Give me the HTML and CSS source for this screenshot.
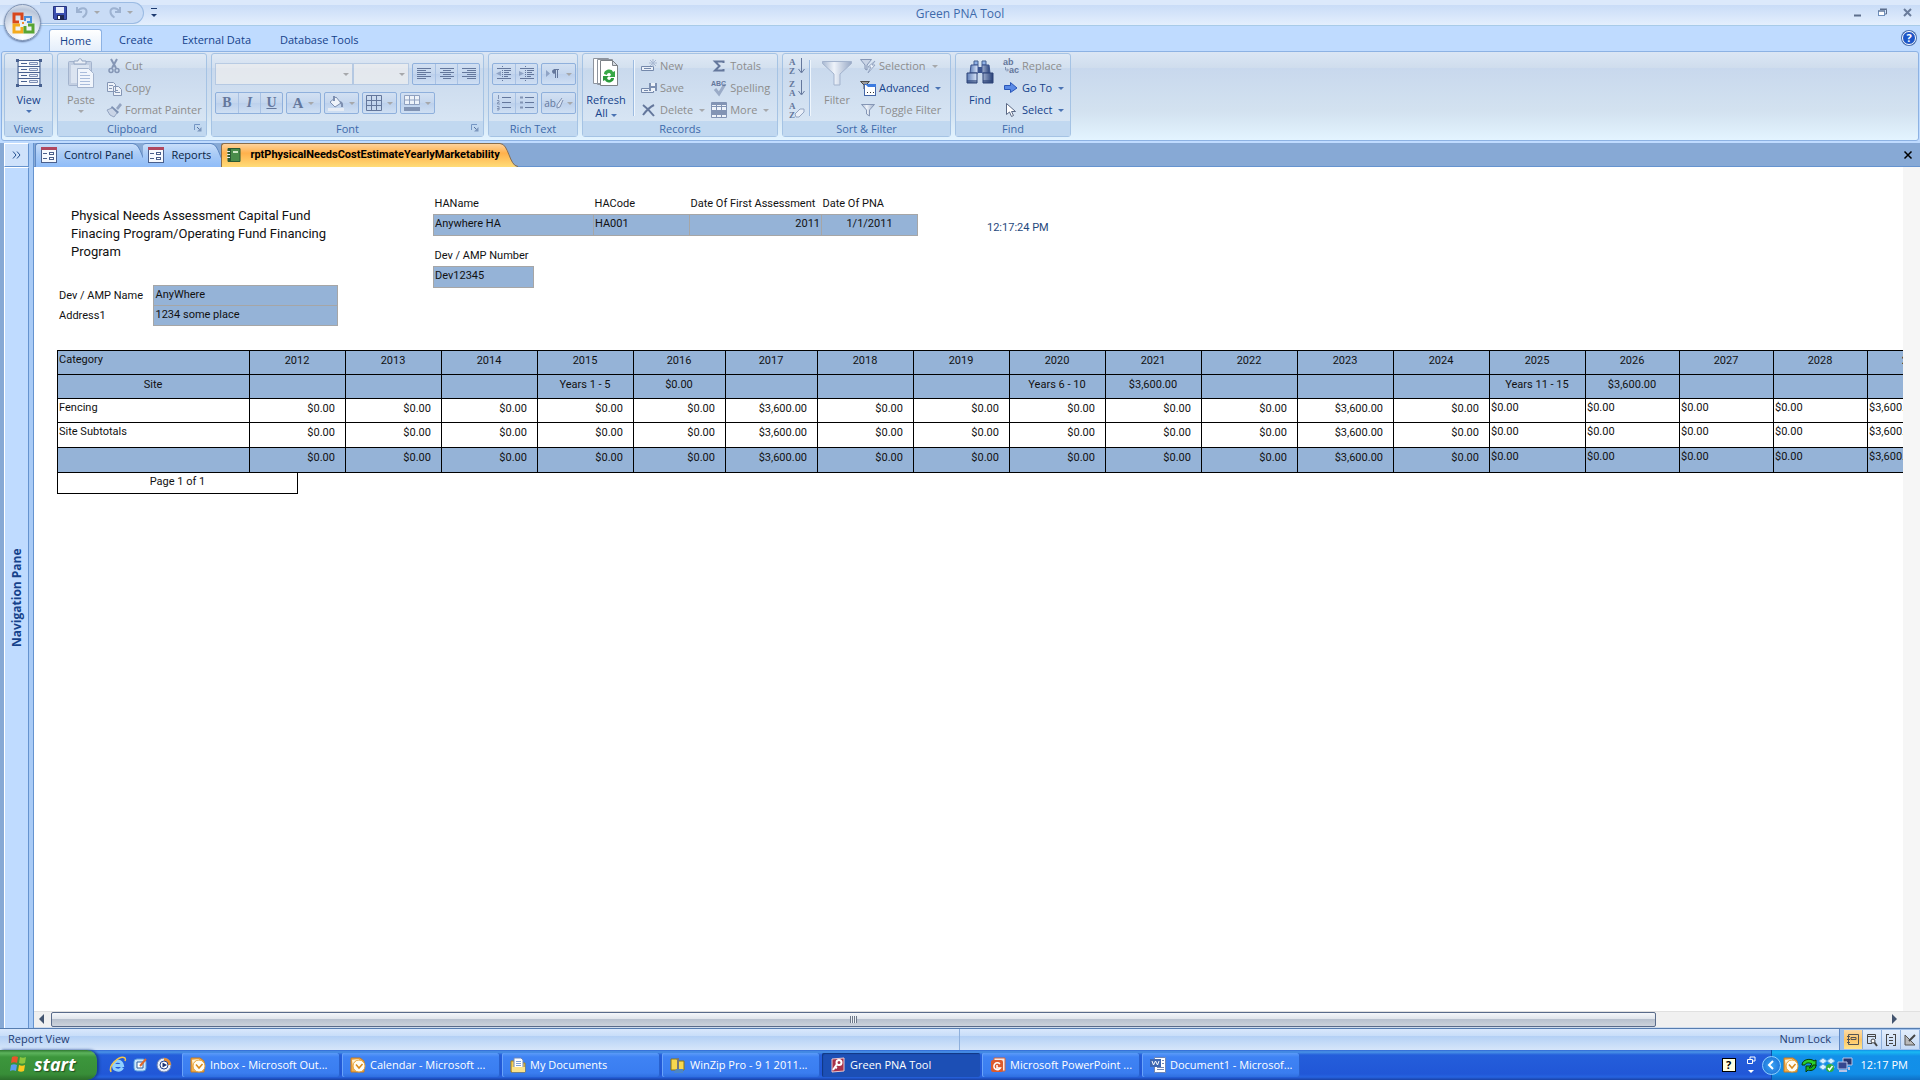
FILE: index.html
```html
<!DOCTYPE html>
<html lang="en">
  <head>
    <meta charset="UTF-8" />
    <meta name="viewport" content="width=device-width, initial-scale=1.0" />
    <title>Green PNA Tool</title>
    <link rel="stylesheet" href="styles.css">
  </head>
  <body>
    <svg class="defs" aria-hidden="true">
      <defs>
        <linearGradient id="g-blue" x1="0" y1="0" x2="0" y2="1">
          <stop offset="0" stop-color="#c8defa" />
          <stop offset="0.45" stop-color="#a9cbf6" />
          <stop offset="1" stop-color="#8fbcf8" />
        </linearGradient>
        <linearGradient id="g-orange" x1="0" y1="0" x2="0" y2="1">
          <stop offset="0" stop-color="#ffd29b" />
          <stop offset="0.4" stop-color="#ffb14c" />
          <stop offset="1" stop-color="#ffdc78" />
        </linearGradient>
        <linearGradient id="g-steel" x1="0" y1="0" x2="1" y2="0">
          <stop offset="0" stop-color="#5f7fb8" />
          <stop offset="0.4" stop-color="#dfeafc" />
          <stop offset="1" stop-color="#263f78" />
        </linearGradient>
        <linearGradient id="g-funnel" x1="0" y1="0" x2="1" y2="0">
          <stop offset="0" stop-color="#a9b9d2" />
          <stop offset="0.4" stop-color="#eef3fa" />
          <stop offset="1" stop-color="#98a9c6" />
        </linearGradient>
        <symbol id="i-form" viewBox="0 0 16 16">
          <rect x=".5" y=".5" width="15" height="15" fill="#f6f9fe" stroke="#4a5f8c" />
          <rect width="16" height="3" fill="#b0475f" />
          <path d="M2 6.500h4M2 11.500h4" stroke="#4a5f8c" />
          <rect x="8.500" y="5.500" width="4" height="2" fill="#fff" stroke="#4a5f8c" />
          <rect x="8.500" y="10.500" width="4" height="2" fill="#fff" stroke="#4a5f8c" />
        </symbol>
        <symbol id="i-outlook" viewBox="0 0 16 16">
          <path d="M1 1h9l4 3v11H1z" fill="#f6b04c" stroke="#c87a1d" />
          <path d="M2 3l7-1v3L3 9z" fill="#fff1cf" />
          <circle cx="9" cy="9" r="6" fill="#fffdf2" stroke="#e7a338" />
          <path d="M6 7.500L9 11l3.500-4" fill="none" stroke="#d98a1d" stroke-width="1.500" />
        </symbol>
        <symbol id="i-launch" viewBox="0 0 8 8">
          <path d="M.5 6V.5H6" fill="none" stroke="#7596c4" />
          <path d="M3 3l3 3" stroke="#54719f" />
          <path d="M7.500 3v4.500H3z" fill="#7d97bd" />
        </symbol>
      </defs>
    </svg>

    <header class="titlebar">
      <div class="title-left">
        <div class="quick-access">
          <button class="qa-btn" aria-label="Save">
            <svg width="14" height="14" viewBox="0 0 14 14"><path d="M.5.5h13v13h-12l-1-1z" fill="#3b4fb0" stroke="#26337c" /><path d="M3 1h8v6H3z" fill="#e8eefb" /><path d="M4 9h7v5H4z" fill="#1f2750" /><path d="M5 10h2v3H5z" fill="#fff" /></svg>
          </button>
          <button class="qa-btn" aria-label="Undo" disabled>
            <svg width="14" height="13" viewBox="0 0 14 13"><path d="M2 1v5h5M2.500 5.500C5 1 12 1 11.500 6c0 3-2 4-4 5.500" fill="none" stroke="#9db2d1" stroke-width="2" /></svg>
            <span class="caret"></span>
          </button>
          <button class="qa-btn" aria-label="Redo" disabled>
            <svg width="14" height="13" viewBox="0 0 14 13"><path d="M12 1v5H7M11.500 5.500C9 1 2 1 2.500 6c0 3 2 4 4 5.500" fill="none" stroke="#9db2d1" stroke-width="2" /></svg>
            <span class="caret"></span>
          </button>
        </div>
        <button class="qa-more" aria-label="Customize Quick Access Toolbar"><span class="caret"></span></button>
      </div>
      <h1 class="app-title">Green PNA Tool</h1>
      <div class="window-buttons">
        <button aria-label="Minimize"><svg width="9" height="9" viewBox="0 0 9 9"><path d="M1 7.500h7" stroke="#5d6f8d" stroke-width="2" /></svg></button>
        <button aria-label="Restore"><svg width="9" height="9" viewBox="0 0 9 9"><path d="M2 1.500h6.500V6H7" fill="none" stroke="#5d6f8d" /><rect x=".5" y="3" width="6" height="4.500" fill="#fff" stroke="#6f8fbb" /><path d="M0 3h7M2 1h7" stroke="#5d6f8d" /></svg></button>
        <button aria-label="Close"><svg width="9" height="9" viewBox="0 0 9 9"><path d="M1 1l7 7M8 1L1 8" stroke="#6a7c9b" stroke-width="2" /></svg></button>
      </div>
    </header>
    <button class="orb" aria-label="Office Button">
      <svg width="24" height="24" viewBox="0 0 24 24" fill="none">
        <path d="M11 9V3H3v8h5" stroke="#d8471c" stroke-width="3" />
        <path d="M14 10V6h6v5h-4" stroke="#4a90dc" stroke-width="2" />
        <path d="M9 14H3v7h8v-5" stroke="#f4ab1e" stroke-width="3" />
        <path d="M14 15v6h8v-7h-5" stroke="#58a532" stroke-width="3" />
        <path d="M11 11h2v2h-2z" fill="#f28a2e" />
      </svg>
    </button>

    <nav class="ribbon-tabs">
      <button class="ribbon-tab active">Home</button>
      <button class="ribbon-tab">Create</button>
      <button class="ribbon-tab">External Data</button>
      <button class="ribbon-tab">Database Tools</button>
      <button class="help" aria-label="Help">?</button>
    </nav>

    <section class="ribbon">
      <div class="group views">
        <div class="group-body">
          <button class="big">
            <svg width="26" height="28" viewBox="0 0 26 28"><path d="M3 2h20v24H3z" fill="#fff" opacity=".8" /><path d="M2 1.500h22v25H2zM2 7.500h22M2 13.500h22M2 19.500h22" stroke="#47608f" fill="none" /><path d="M5 4.500h6M5 10.500h6M5 16.500h6M5 22.500h6" stroke="#47608f" /><path d="M13.500 3.500h8v2h-8zM13.500 9.500h8v2h-8zM13.500 15.500h8v2h-8zM13.500 21.500h8v2h-8z" fill="#e8eefb" stroke="#7d8fb3" /><path d="M0 0h3v3H0zM23 0h3v3h-3zM0 25h3v3H0zM23 25h3v3h-3z" fill="#47608f" /></svg>
            <span>View</span><span class="caret"></span>
          </button>
        </div>
        <div class="group-label">Views</div>
      </div>

      <div class="group clipboard">
        <div class="group-body">
          <button class="big" disabled>
            <svg width="28" height="30" viewBox="0 0 28 30"><rect x="1.500" y="3.500" width="23" height="24" rx="1" fill="#c3cfe2" stroke="#a3b3cd" /><rect x="4" y="7" width="18" height="18" fill="#dbe4f1" /><path d="M7 6V3h4c0-3 4-3 4 0h4v3z" fill="#e9eef6" stroke="#93a5c2" /><path d="M10.500 10.500h11l5 5v14h-16z" fill="#f0f5fc" stroke="#a3b3cd" /><path d="M13 14.500h7M13 17.500h10M13 20.500h10M13 23.500h10M13 26.500h10" stroke="#a9bcdb" /></svg>
            <span>Paste</span><span class="caret"></span>
          </button>
          <div class="stack">
            <button class="small" disabled><svg width="16" height="16" viewBox="0 0 16 16" fill="none"><path d="M5 1l5 9M11 1L6 10" stroke="#8596b5" stroke-width="2" /><circle cx="5" cy="12.500" r="2" stroke="#8596b5" stroke-width="1.500" /><circle cx="11" cy="12.500" r="2" stroke="#8596b5" stroke-width="1.500" /></svg>Cut</button>
            <button class="small" disabled><svg width="16" height="16" viewBox="0 0 16 16"><path d="M1.500 2.500h6l2 2v7h-8zM7.500 6.500h5l3 3v6h-8z" fill="#edf2f9" stroke="#8596b5" /><path d="M3 5.500h4M3 8.500h3M9 10.500h3M9 12.500h5" stroke="#8596b5" /></svg>Copy</button>
            <button class="small" disabled><svg width="16" height="16" viewBox="0 0 16 16"><path d="M10 6l4-5 2 2-4 5z" fill="#93a4c1" /><path d="M6 4l7 6-2 2-7-5z" fill="#7b8fb1" /><path d="M1 8l5-2 5 5-3 4-4-2z" fill="#c9d4e6" stroke="#93a4c1" /></svg>Format Painter</button>
          </div>
        </div>
        <div class="group-label">Clipboard<button class="launcher" aria-label="Clipboard options"><svg width="8" height="8"><use href="#i-launch" /></svg></button></div>
      </div>

      <div class="group font">
        <div class="group-body tools">
          <div class="tool-row">
            <div class="combos">
              <label class="combo wide"><select aria-label="Font" disabled></select><span class="caret"></span></label>
              <label class="combo"><select aria-label="Font Size" disabled></select><span class="caret"></span></label>
            </div>
            <div class="cluster">
              <button aria-label="Align Left" disabled><svg width="16" height="14" viewBox="0 0 16 14"><path d="M1 1.500h14M1 3.500h9M1 5.500h14M1 7.500h9M1 9.500h14M1 11.500h9" stroke="#64779c" /></svg></button>
              <button aria-label="Center" disabled><svg width="16" height="14" viewBox="0 0 16 14"><path d="M1 1.500h14M4 3.500h8M1 5.500h14M4 7.500h8M1 9.500h14M4 11.500h8" stroke="#64779c" /></svg></button>
              <button aria-label="Align Right" disabled><svg width="16" height="14" viewBox="0 0 16 14"><path d="M1 1.500h14M6 3.500h9M1 5.500h14M6 7.500h9M1 9.500h14M6 11.500h9" stroke="#64779c" /></svg></button>
            </div>
          </div>
          <div class="tool-row">
            <div class="cluster serif">
              <button disabled><b>B</b></button>
              <button disabled><b><i>I</i></b></button>
              <button disabled><b><u>U</u></b></button>
            </div>
            <div class="cluster serif"><button class="drop" aria-label="Font Color" disabled><span class="letter">A</span><span class="caret"></span></button></div>
            <div class="cluster"><button class="drop" aria-label="Fill Color" disabled><svg width="16" height="16" viewBox="0 0 16 16"><path d="M2 7l6-5 5 6-6 4z" fill="#eef3fa" stroke="#7d8fb0" /><path d="M6 1v5M12 7c3 1 2 3 2 5" stroke="#7d8fb0" stroke-width="2" fill="none" /><path d="M0 13h16v3H0z" fill="#e6ecf5" /></svg><span class="caret"></span></button></div>
            <div class="cluster"><button class="drop" aria-label="Gridlines" disabled><svg width="16" height="16" viewBox="0 0 16 16"><path d="M.5.5h15v15H.5zM5.500 0v16M10.500 0v16M0 5.500h16M0 10.500h16" fill="none" stroke="#64779c" /></svg><span class="caret"></span></button></div>
            <div class="cluster"><button class="drop" aria-label="Alternate Fill" disabled><svg width="16" height="16" viewBox="0 0 16 16"><path d="M.5.500h15v9H.5zM5.500 0v10M10.500 0v10M0 5h16" fill="#eef3fa" stroke="#8fa0bf" /><path d="M0 12h16v4H0z" fill="#8294b4" /></svg><span class="caret"></span></button></div>
          </div>
        </div>
        <div class="group-label">Font<button class="launcher" aria-label="Font options"><svg width="8" height="8"><use href="#i-launch" /></svg></button></div>
      </div>

      <div class="group richtext">
        <div class="group-body tools">
          <div class="tool-row">
            <div class="cluster">
              <button aria-label="Decrease Indent" disabled><svg width="16" height="16" viewBox="0 0 16 16"><path d="M1 2.500h14M8 4.500h7M8 6.500h5M8 8.500h7M8 10.500h4M1 12.500h14" stroke="#64779c" /><path d="M6.500 0v16" stroke="#64779c" stroke-dasharray="1 1" /><path d="M5 5v5L0 7.500z" fill="#8fa3c5" /></svg></button>
              <button aria-label="Increase Indent" disabled><svg width="16" height="16" viewBox="0 0 16 16"><path d="M1 2.500h14M8 4.500h7M8 6.500h5M8 8.500h7M8 10.500h4M1 12.500h14" stroke="#64779c" /><path d="M6.500 0v16" stroke="#64779c" stroke-dasharray="1 1" /><path d="M0 5v5l5-2.500z" fill="#8fa3c5" /></svg></button>
            </div>
            <div class="cluster"><button class="drop" aria-label="Text Direction" disabled><svg width="16" height="12" viewBox="0 0 16 12"><path d="M1 2v7l4-3.500z" fill="#8fa3c5" /><path d="M9 6V1.500h5M10.500 1v9M12.500 1v9" stroke="#64779c" fill="none" /><circle cx="9" cy="3.500" r="2" fill="#64779c" /></svg><span class="caret"></span></button></div>
          </div>
          <div class="tool-row">
            <div class="cluster">
              <button aria-label="Numbering" disabled><svg width="16" height="16" viewBox="0 0 16 16"><path d="M6 2.500h9M6 7.500h9M6 12.500h9" stroke="#64779c" /><path d="M2.500 0v4M1 5.500h2v2H1.500v1.500H4M1 11.500h2v2H1M3 13v2H1" stroke="#8294b4" fill="none" /></svg></button>
              <button aria-label="Bullets" disabled><svg width="16" height="16" viewBox="0 0 16 16"><path d="M6 2.500h9M6 7.500h9M6 12.500h9" stroke="#64779c" /><path d="M1 1.500h3v2H1zM1 6.500h3v2H1zM1 11.500h3v2H1z" fill="#8294b4" /></svg></button>
            </div>
            <div class="cluster"><button class="drop highlight" aria-label="Text Highlight Color" disabled><span>ab</span><svg width="7" height="12" viewBox="0 0 7 12"><path d="M6 1L1 8v3l3-1 3-7" fill="#dbe4f1" stroke="#7d8fb0" /></svg><span class="caret"></span></button></div>
          </div>
        </div>
        <div class="group-label">Rich Text</div>
      </div>

      <div class="group records">
        <div class="group-body">
          <button class="big">
            <svg width="26" height="30" viewBox="0 0 26 30"><path d="M.5.500h15v25H.5zM4.500 1.500h15v25h-15z" fill="#fff" stroke="#8e949e" /><path d="M7.500 2.500h12l5 5v20h-17z" fill="#fff" stroke="#7d8288" /><path d="M19.500 2.500v5h5z" fill="#d5dae2" stroke="#7d8288" /><path d="M11 16c0-5 8-6 9-2l2-1v6h-6l2-2c-1-3-4-2-4 0z" fill="#37a847" /><path d="M21 20c0 5-8 6-9 2l-2 1v-5h6l-2 2c1 3 4 2 4 0z" fill="#2b9a3c" /></svg>
            <span>Refresh</span><span>All <span class="caret"></span></span>
          </button>
          <div class="rule"></div>
          <div class="stack">
            <button class="small" disabled><svg width="16" height="16" viewBox="0 0 16 16"><path d="M.5 8.500h12v4H.5zM3 10.500h7" fill="#e9eff8" stroke="#7488ab" /><path d="M12 1v8M8 5h8M9 2l6 6M15 2L9 8" stroke="#a9b9d3" /></svg>New</button>
            <button class="small" disabled><svg width="16" height="16" viewBox="0 0 16 16"><path d="M.5 8.500h12v4H.5zM3 10.500h4" fill="#e9eff8" stroke="#7488ab" /><path d="M8 3h8v8H8z" fill="#7d90b2" /><path d="M10 3h4v3h-4zM10 8h4v3h-4z" fill="#edf2f9" /></svg>Save</button>
            <button class="small" disabled><svg width="16" height="16" viewBox="0 0 16 16"><path d="M2 3c4 3 7 6 11 11M13 3C9 5 5 9 2 13" stroke="#64779c" stroke-width="2" fill="none" /></svg>Delete <span class="caret"></span></button>
          </div>
          <div class="stack">
            <button class="small" disabled><svg width="16" height="16" viewBox="0 0 16 16"><path d="M12.500 5V3.500H4L8.500 8 4 12.500h8.500V11" fill="none" stroke="#64779c" stroke-width="2" /></svg>Totals</button>
            <button class="small" disabled><svg width="16" height="16" viewBox="0 0 16 16"><path d="M4 9l4 5 6-10" fill="none" stroke="#9aabc7" stroke-width="3" /><text x="0" y="6" class="tiny">ABC</text></svg>Spelling</button>
            <button class="small" disabled><svg width="16" height="16" viewBox="0 0 16 16"><path d="M.5.500h15v15H.5zM0 4.500h16M0 8.500h16M0 12.500h16M5.500 0v16M10.500 0v16" fill="#eef3fa" stroke="#8294b4" /><path d="M0 1h16v2H0zM0 9h16v3H0z" fill="#8294b4" /></svg>More <span class="caret"></span></button>
          </div>
        </div>
        <div class="group-label">Records</div>
      </div>

      <div class="group sort">
        <div class="group-body">
          <div class="stack">
            <button class="small" aria-label="Sort Ascending" disabled><svg width="16" height="16" viewBox="0 0 16 16"><text x="0" y="7" class="az">A</text><text x="0" y="16" class="az">Z</text><path d="M12.500 0v14M9.500 11l3 4 3-4" fill="none" stroke="#64779c" /></svg></button>
            <button class="small" aria-label="Sort Descending" disabled><svg width="16" height="16" viewBox="0 0 16 16"><text x="0" y="7" class="az">Z</text><text x="0" y="16" class="az">A</text><path d="M12.500 0v14M9.500 11l3 4 3-4" fill="none" stroke="#64779c" /></svg></button>
            <button class="small" aria-label="Clear All Sorts" disabled><svg width="16" height="16" viewBox="0 0 16 16"><text x="0" y="7" class="az">A</text><text x="0" y="16" class="az">Z</text><path d="M6 12l5-5h4v3l-5 5H7z" fill="#e9eff8" stroke="#93a4c1" /></svg></button>
          </div>
          <div class="rule"></div>
          <button class="big" disabled>
            <svg width="30" height="28" viewBox="0 0 30 28"><path d="M.5 2.500h29v2L18 15v11h-6V15L.5 4.500z" fill="url(#g-funnel)" stroke="#a3b3cd" /></svg>
            <span>Filter</span>
          </button>
          <div class="stack">
            <button class="small" disabled><svg width="16" height="16" viewBox="0 0 16 16"><path d="M.5 1.500h11L7 7v5l-2-1V7z" fill="#c9d4e6" stroke="#8596b5" /><path d="M15 3L8 9h3l-3 6 7-8h-3z" fill="#eef3fa" stroke="#93a4c1" /></svg>Selection <span class="caret"></span></button>
            <button class="small"><svg width="16" height="16" viewBox="0 0 16 16"><path d="M.5 1.500h9L6 5v5L4 9V5z" fill="#9a9a9a" stroke="#4c4c4c" /><rect x="4.500" y="4.500" width="11" height="11" fill="#fff" stroke="#4466a8" /><path d="M5 4h11v3H8z" fill="#3c7be0" /><path d="M7 12.500h7" stroke="#333" stroke-dasharray="1 2" /></svg>Advanced <span class="caret"></span></button>
            <button class="small" disabled><svg width="16" height="16" viewBox="0 0 16 16"><path d="M1.500 2.500h13L9.500 8v6l-3-2V8z" fill="url(#g-funnel)" stroke="#8596b5" /></svg>Toggle Filter</button>
          </div>
        </div>
        <div class="group-label">Sort &amp; Filter</div>
      </div>

      <div class="group find">
        <div class="group-body">
          <button class="big">
            <svg width="28" height="28" viewBox="0 0 28 28"><path d="M8 2h4v4H8zM16 2h4v4h-4z" fill="#8fb0e6" stroke="#47608f" /><path d="M5 6h7v8H4zM16 6h7l1 8h-8z" fill="url(#g-steel)" stroke="#3c5590" /><path d="M12 8h4v6h-4z" fill="#3c5590" /><path d="M1 14h10v10H1zM17 14h10v10H17z" fill="url(#g-steel)" stroke="#2c4276" /><path d="M1 21h10v3H1zM17 21h10v3H17z" fill="#2c4276" opacity=".6" /></svg>
            <span>Find</span>
          </button>
          <div class="stack">
            <button class="small" disabled><svg width="16" height="16" viewBox="0 0 16 16"><text x="0" y="7" class="abc">ab</text><text x="6" y="15" class="abc">ac</text><path d="M2.500 9v3H5M4 10.500L5.500 12 4 13.500" fill="none" stroke="#8596b5" /></svg>Replace</button>
            <button class="small"><svg width="16" height="16" viewBox="0 0 16 16"><path d="M1.500 5.500h6v-3L14 8l-6.500 4.500v-3h-6z" fill="#5a8ae6" stroke="#2a56b8" /></svg>Go To <span class="caret"></span></button>
            <button class="small"><svg width="16" height="16" viewBox="0 0 16 16"><path d="M3.500 1.500v11l3-2.500 2 4.500 2-1-2-4h4z" fill="#fff" stroke="#5a6884" /></svg>Select <span class="caret"></span></button>
          </div>
        </div>
        <div class="group-label">Find</div>
      </div>
    </section>

    <main class="workspace">
      <aside class="nav-pane">
        <button class="nav-open" aria-label="Open Navigation Pane"><svg width="9" height="8" viewBox="0 0 9 8"><path d="M1 .5L4 4 1 7.500M5 .5L8 4 5 7.500" fill="none" stroke="#24508f" /></svg></button>
        <button class="nav-title">Navigation Pane</button>
      </aside>
      <div class="document">
        <div class="doc-tabs">
          <button class="doc-tab">
            <span class="doc-face"><svg width="16" height="16"><use href="#i-form" /></svg>Control Panel</span>
            <svg class="cap" width="18" height="24" viewBox="0 0 18 24"><path d="M0 1C9 1 9 23 18 24H0z" fill="url(#g-blue)" /><path d="M0 .5C9 .5 9 23 18 23.500" fill="none" stroke="#5f89c4" /></svg>
          </button>
          <button class="doc-tab second">
            <span class="doc-face"><svg width="16" height="16"><use href="#i-form" /></svg>Reports</span>
            <svg class="cap" width="18" height="24" viewBox="0 0 18 24"><path d="M0 1C9 1 9 23 18 24H0z" fill="url(#g-blue)" /><path d="M0 .5C9 .5 9 23 18 23.500" fill="none" stroke="#5f89c4" /></svg>
          </button>
          <button class="doc-tab current">
            <span class="doc-face"><svg width="14" height="14" viewBox="0 0 14 14"><path d="M1 .5h12v13H1z" fill="#4a8c4a" stroke="#2b5a33" /><path d="M1 1h3v12H1z" fill="#2b5a33" /><path d="M6 3h5v2H6z" fill="#cfe6c4" /><path d="M0 3.500h3M0 6.500h3M0 9.500h3" stroke="#e8e8e8" /></svg>rptPhysicalNeedsCostEstimateYearlyMarketability</span>
            <svg class="cap" width="18" height="24" viewBox="0 0 18 24"><path d="M0 1C9 1 9 23 18 24H0z" fill="url(#g-orange)" /><path d="M0 .5C9 .5 9 23 18 23.500" fill="none" stroke="#8a6d4b" /></svg>
          </button>
          <button class="doc-close" aria-label="Close document"><svg width="8" height="8" viewBox="0 0 8 8"><path d="M.5.500l7 7M7.500.500l-7 7" stroke="#000" stroke-width="1.500" /></svg></button>
        </div>

        <div class="report">
          <div class="report-head">
            <div class="head-left">
              <h2>Physical Needs Assessment Capital Fund Finacing Program/Operating Fund Financing Program</h2>
              <table class="address">
                <tr><th>Dev / AMP Name</th><td>AnyWhere</td></tr>
                <tr><th>Address1</th><td>1234 some place</td></tr>
              </table>
            </div>
            <div class="head-middle">
              <table class="fields">
                <colgroup><col class="w160"><col class="w96"><col class="w132"><col class="w96"></colgroup>
                <tr><th>HAName</th><th>HACode</th><th>Date Of First Assessment</th><th>Date Of PNA</th></tr>
                <tr><td>Anywhere HA</td><td>HA001</td><td class="num">2011</td><td class="mid">1/1/2011</td></tr>
              </table>
              <table class="fields amp">
                <tr><th>Dev / AMP Number</th></tr>
                <tr><td>Dev12345</td></tr>
              </table>
            </div>
            <div class="time">12:17:24 PM</div>
          </div>

          <table class="costs">
            <colgroup>
              <col class="w192"><col class="w96" span="4"><col class="w92" span="2"><col class="w96" span="8"><col class="w94" span="4">
            </colgroup>
            <thead>
              <tr><th class="left">Category</th><th>2012</th><th>2013</th><th>2014</th><th>2015</th><th>2016</th><th>2017</th><th>2018</th><th>2019</th><th>2020</th><th>2021</th><th>2022</th><th>2023</th><th>2024</th><th>2025</th><th>2026</th><th>2027</th><th>2028</th><th>2029</th></tr>
              <tr><th>Site</th><th></th><th></th><th></th><th>Years 1 - 5</th><th>$0.00</th><th></th><th></th><th></th><th>Years 6 - 10</th><th>$3,600.00</th><th></th><th></th><th></th><th>Years 11 - 15</th><th>$3,600.00</th><th></th><th></th><th></th></tr>
            </thead>
            <tbody>
              <tr><td>Fencing</td><td>$0.00</td><td>$0.00</td><td>$0.00</td><td>$0.00</td><td>$0.00</td><td>$3,600.00</td><td>$0.00</td><td>$0.00</td><td>$0.00</td><td>$0.00</td><td>$0.00</td><td>$3,600.00</td><td>$0.00</td><td>$0.00</td><td>$0.00</td><td>$0.00</td><td>$0.00</td><td>$3,600.00</td></tr>
              <tr class="subtotal"><td>Site Subtotals</td><td>$0.00</td><td>$0.00</td><td>$0.00</td><td>$0.00</td><td>$0.00</td><td>$3,600.00</td><td>$0.00</td><td>$0.00</td><td>$0.00</td><td>$0.00</td><td>$0.00</td><td>$3,600.00</td><td>$0.00</td><td>$0.00</td><td>$0.00</td><td>$0.00</td><td>$0.00</td><td>$3,600.00</td></tr>
            </tbody>
            <tfoot>
              <tr><td></td><td>$0.00</td><td>$0.00</td><td>$0.00</td><td>$0.00</td><td>$0.00</td><td>$3,600.00</td><td>$0.00</td><td>$0.00</td><td>$0.00</td><td>$0.00</td><td>$0.00</td><td>$3,600.00</td><td>$0.00</td><td>$0.00</td><td>$0.00</td><td>$0.00</td><td>$0.00</td><td>$3,600.00</td></tr>
            </tfoot>
          </table>
          <div class="page-no">Page 1 of 1</div>
        </div>

        <div class="scrollbar">
          <button aria-label="Scroll left"><svg width="6" height="10" viewBox="0 0 6 10"><path d="M5 0v10L0 5z" fill="#43546f" /></svg></button>
          <div class="track"><div class="thumb"><span class="grip"></span></div></div>
          <button aria-label="Scroll right"><svg width="6" height="10" viewBox="0 0 6 10"><path d="M1 0v10l5-5z" fill="#43546f" /></svg></button>
        </div>
      </div>
    </main>

    <footer class="statusbar">
      <span class="status-view">Report View</span>
      <span class="status-lock">Num Lock</span>
      <div class="view-buttons">
        <button class="on" aria-label="Report View"><svg width="12" height="12" viewBox="0 0 12 12"><path d="M1.500.500h10v10h-10zM4 3.500h5v2H4zM0 2.500h3M0 5.500h3M0 8.500h3" fill="none" stroke="#555" /></svg></button>
        <button aria-label="Print Preview"><svg width="12" height="12" viewBox="0 0 12 12"><path d="M6 9.500H1.500v-9h8V5M2 2.500h7" fill="none" stroke="#444" /><circle cx="7" cy="7" r="2" fill="#fff" stroke="#444" /><path d="M8.500 8.500L11 12" stroke="#444" stroke-width="2" /></svg></button>
        <button aria-label="Layout View"><svg width="12" height="12" viewBox="0 0 12 12"><path d="M1.500 0v12M10.500 0v12M1 .5h3M8 .5h3M4 3.500h4M4 6.500h4M4 9.500h4M1 11.500h3M8 11.500h3" fill="none" stroke="#444" /></svg></button>
        <button aria-label="Design View"><svg width="12" height="12" viewBox="0 0 12 12"><path d="M1 1v10h10z" fill="#b9b9b9" stroke="#555" /><path d="M11 1L5 7" stroke="#444" stroke-width="2" /></svg></button>
      </div>
    </footer>

    <div class="taskbar">
      <button class="start">
        <svg width="20" height="18" viewBox="0 0 20 18"><path d="M3 2c2-1 4-1 6 0L8 8C6 7 4 7 2 8z" fill="#e8542a" /><path d="M11 2c2 1 4 1 6 0l-1 6c-2 1-4 1-6 0z" fill="#8cc63e" /><path d="M2 10c2-1 4-1 6 0l-1 6c-2-1-4-1-6 0z" fill="#5a9cf0" /><path d="M10 10c2 1 4 1 6 0l-1 6c-2 1-4 1-6 0z" fill="#fcc81e" /></svg>
        start
      </button>
      <div class="quick-launch">
        <button aria-label="Internet Explorer"><svg width="16" height="16" viewBox="0 0 16 16"><path d="M12.500 10.500c-2 4-9 3.500-9-2s8-6 9 0H4" fill="none" stroke="#8fd0ff" stroke-width="3" /><path d="M1 15C-2 8 10-2 15 1c1 1 0 3 0 3" fill="none" stroke="#f3c74a" stroke-width="1.500" /></svg></button>
        <button aria-label="Show Desktop"><svg width="16" height="16" viewBox="0 0 16 16"><rect x="1" y="2" width="12" height="12" rx="3" fill="#cfe6fb" stroke="#5aa0e0" /><path d="M4 5h6v6H4z" fill="#fff" stroke="#2d5f9e" /><path d="M7 9l6-7" stroke="#e0672a" stroke-width="2" /></svg></button>
        <button aria-label="Media Player"><svg width="16" height="16" viewBox="0 0 16 16"><circle cx="8" cy="8" r="7" fill="#e8eefa" stroke="#6a7fb0" /><path d="M8 1a7 7 0 017 7H8z" fill="#e88a2c" /><circle cx="8" cy="8" r="4" fill="#fff" stroke="#26428c" /><path d="M6.500 5.500v5L11 8z" fill="#1d3477" /></svg></button>
      </div>
      <div class="tasks">
        <button class="task"><svg width="16" height="16"><use href="#i-outlook" /></svg>Inbox - Microsoft Out...</button>
        <button class="task"><svg width="16" height="16"><use href="#i-outlook" /></svg>Calendar - Microsoft ...</button>
        <button class="task"><svg width="16" height="16" viewBox="0 0 16 16"><path d="M1 4h5l1 2h8v9H1z" fill="#f4cf58" stroke="#a5811d" /><path d="M4 1h7l2 2v8H4z" fill="#fff" stroke="#7089b8" /><path d="M6 4.500h5M6 6.500h5M6 8.500h5" stroke="#7da0d8" /><path d="M2 10h13v5H2z" fill="#fbe28a" /></svg>My Documents</button>
        <button class="task"><svg width="16" height="16" viewBox="0 0 16 16"><path d="M1 2h6l1 2h6v9H1z" fill="#f7d84f" stroke="#8b7414" /><path d="M8 1v12" stroke="#777" stroke-width="2" /><path d="M6 12h7v4H4z" fill="#4b86c8" /></svg>WinZip Pro - 9 1 2011...</button>
        <button class="task pressed"><svg width="16" height="16" viewBox="0 0 16 16"><path d="M2 2l12-1v13l-12 1z" fill="#a8324a" stroke="#e8c7ce" /><circle cx="9" cy="5.500" r="2.500" fill="none" stroke="#fff" stroke-width="2" /><path d="M7 7l-4 6M5 10l2 1" stroke="#fff" stroke-width="2" /></svg>Green PNA Tool</button>
        <button class="task"><svg width="16" height="16" viewBox="0 0 16 16"><path d="M4 1h11v13H4z" fill="#fbe9e2" stroke="#d8643a" /><rect x="1" y="3" width="12" height="12" rx="2" fill="#dc5a2c" /><path d="M10 7a3.500 3.500 0 10.500 4H7V8" fill="none" stroke="#fff" stroke-width="1.500" /></svg>Microsoft PowerPoint ...</button>
        <button class="task"><svg width="16" height="16" viewBox="0 0 16 16"><path d="M4.500.500h11v15h-11z" fill="#fff" stroke="#6f86b5" /><path d="M7 10.500h7M7 12.500h7M12 3.500h2M12 6.500h2" stroke="#6f86b5" /><path d="M0 2h11v8H0z" fill="#3d67b1" /><path d="M2 4l1.500 4L5.500 4l2 4L9 4" fill="none" stroke="#fff" /></svg>Document1 - Microsof...</button>
      </div>
      <div class="lang">
        <button class="ask" aria-label="Language help">?</button>
        <button class="restore" aria-label="Restore language bar"><svg width="9" height="18" viewBox="0 0 9 18"><path d="M3 3V1h5v4H6M.5 3.500h5v4h-5z" fill="none" stroke="#fff" /><path d="M1 14h6l-3 3z" fill="#fff" /></svg></button>
      </div>
      <div class="tray">
        <button class="chevron" aria-label="Show hidden icons"><svg width="8" height="10" viewBox="0 0 8 10"><path d="M6 1L2 5l4 4" fill="none" stroke="#fff" stroke-width="2" /></svg></button>
        <svg width="16" height="16"><use href="#i-outlook" /></svg>
        <svg width="16" height="16" viewBox="0 0 16 16"><path d="M1 8c0-6 9-7 12-4l2-1v6H9l2-2C8 5 4 6 4 8z" fill="#2cd12c" stroke="#063a06" /><path d="M15 8c0 6-7 6-8 5l-2 2V9h5l-2 2c2 0 4-1 4-3z" fill="#1cb41c" stroke="#063a06" /></svg>
        <svg width="16" height="16" viewBox="0 0 16 16"><path d="M4 1l4 3-4 3-4-3zM12 1l4 3-4 3-4-3zM4 7l4 3-4 3-4-3zM12 7l4 3-4 3-4-3z" fill="#d9f0ff" stroke="#5aa9e6" /><circle cx="11" cy="11" r="4" fill="#2fae3c" /><path d="M9 11l1.500 2L13.500 9" fill="none" stroke="#fff" stroke-width="1.500" /></svg>
        <svg width="16" height="16" viewBox="0 0 16 16"><path d="M6 1h9v7H6z" fill="#27356f" stroke="#b9c4e6" /><path d="M1 5h9v7H1z" fill="#35478f" stroke="#b9c4e6" /><path d="M2 14h8M12 10v3" stroke="#b9c4e6" stroke-width="2" /></svg>
        <span class="clock">12:17 PM</span>
      </div>
    </div>
  </body>
</html>
```
FILE: styles.css
```css
* {
  box-sizing: border-box;
}
:root {
  --ink: #15428b;
  --line: #6593cf;
  --sky: #bfdbff;
  --steel: #87a9d5;
  --cell: #95b3d7;
}
body {
  margin: 0;
  height: 100vh;
  display: flex;
  flex-direction: column;
  overflow: hidden;
  position: relative;
  font: 11px/14px "Open Sans", "Noto Sans", sans-serif;
  color: var(--ink);
  background: var(--sky);
}
button {
  font: inherit;
  color: inherit;
  background: none;
  border: 0;
  padding: 0;
  white-space: nowrap;
}
button:disabled {
  color: #8d8d8d;
}
svg {
  display: block;
  flex: none;
  overflow: visible;
}
.defs {
  position: absolute;
  width: 0;
  height: 0;
}
.caret {
  display: inline-block;
  flex: none;
  border: 3px solid transparent;
  border-top-color: #4a73b3;
  border-bottom: 0;
}
:disabled .caret,
.combo .caret {
  border-top-color: #a6a8ab;
}

/* title bar */
.titlebar {
  display: grid;
  grid-template-columns: 1fr auto 1fr;
  align-items: center;
  height: 26px;
  flex: none;
  border-bottom: 1px solid #a8cbe8;
  background: linear-gradient(#dce9fb 0 5px, #c9dcf7 5px, #e4effd);
}
.title-left {
  display: flex;
  align-items: center;
  padding-left: 40px;
}
.quick-access {
  display: flex;
  align-items: center;
  gap: 8px;
  height: 22px;
  padding: 0 10px 0 13px;
  border: 1px solid #9bbbe3;
  border-left: 0;
  border-radius: 0 11px 11px 0;
  background: #c9dcf6;
}
.qa-btn {
  display: flex;
  align-items: center;
  gap: 5px;
}
.qa-more {
  margin-left: 7px;
  padding-top: 2px;
  border-top: 1px solid #1d3b70;
  line-height: 4px;
}
.qa-more .caret {
  border-top-color: #1d3b70;
}
.app-title {
  margin: 0;
  padding-top: 3px;
  font-weight: 400;
  font-size: 12px;
  line-height: 20px;
  color: #3e6aaa;
}
.window-buttons {
  display: flex;
  justify-content: flex-end;
  gap: 16px;
  padding-right: 8px;
}
.orb {
  position: absolute;
  left: 4px;
  top: 4px;
  width: 37px;
  height: 37px;
  padding: 6px;
  border: 1px solid #7f93b3;
  border-radius: 50%;
  background: radial-gradient(circle at 50% 90%, #fff, #e4eaf3 45%, #b9c6da 75%, #f4f7fb);
  box-shadow: 0 1px 2px #5b7199;
}

/* ribbon */
.ribbon-tabs {
  display: flex;
  align-items: flex-end;
  height: 25px;
  flex: none;
  padding: 0 4px 0 49px;
}
.ribbon-tab {
  height: 22px;
  padding: 0 14px 0 15px;
}
.ribbon-tab.active {
  padding: 0 10px;
  margin-right: 2px;
  border: 1px solid #8db2e3;
  border-bottom: 0;
  border-radius: 3px 3px 0 0;
  background: linear-gradient(#fff, #e4eefb);
}
.help {
  width: 14px;
  height: 14px;
  margin: 0 0 6px auto;
  border: 1px solid #fff;
  border-radius: 50%;
  background: #1d56c8;
  box-shadow: 0 0 0 1px #4a6fae;
  color: #fff;
  font-weight: 700;
  line-height: 12px;
}
.ribbon {
  display: flex;
  gap: 4px;
  height: 90px;
  flex: none;
  margin: 0 1px 2px;
  padding: 1px 2px 3px;
  border: 1px solid #8db2e3;
  border-radius: 3px;
  background: linear-gradient(#dbe6f4, #cfdded 16px, #c8d8ed 16px, #d3e2f0 60px, #e3f4ff);
}
.group {
  display: flex;
  flex-direction: column;
  border: 1px solid #a5c3e4;
  border-radius: 3px;
  background: linear-gradient(#dfe9f5, #d3e0ef 14px, #c9d9ed 14px, #dbe8f5);
}
.group-body {
  display: flex;
  flex: 1;
  padding: 1px 4px 0;
}
.group-label {
  position: relative;
  height: 15px;
  line-height: 15px;
  text-align: center;
  color: #3e6aaa;
  background: #c1d8f0;
}
.launcher {
  position: absolute;
  right: 4px;
  top: 3px;
}
.views { width: 49px; }
.clipboard { width: 150px; }
.font { width: 273px; }
.richtext { width: 90px; }
.records { width: 196px; }
.sort { width: 169px; }
.find { width: 116px; }
.big {
  display: flex;
  flex-direction: column;
  align-items: center;
  width: 40px;
  line-height: 13px;
}
.big > svg {
  height: 30px;
  margin: 3px 0 5px;
}
.big > .caret {
  margin-top: 4px;
}
.clipboard .big,
.records .big {
  width: 46px;
}
.clipboard .group-body,
.records .group-body {
  padding-left: 0;
}
.sort .group-body {
  padding-left: 6px;
}
.stack {
  display: flex;
  flex-direction: column;
  align-items: flex-start;
}
.small {
  display: flex;
  align-items: center;
  gap: 3px;
  height: 22px;
}
.small .caret {
  margin-left: 3px;
}
.clipboard .stack {
  margin-left: 2px;
}
.records .stack + .stack {
  margin-left: 6px;
}
.sort .big + .stack,
.find .stack {
  margin-left: 3px;
}
.rule {
  width: 2px;
  height: 56px;
  margin: 5px 6px 0 4px;
  background: linear-gradient(90deg, #9dbbe0 1px, #eff6fd 1px);
}
.tools {
  flex-direction: column;
  gap: 7px;
  padding: 9px 3px 0;
}
.tool-row {
  display: flex;
  gap: 3px;
}
.combos {
  display: flex;
}
.combo {
  position: relative;
  width: 56px;
}
.combo.wide {
  width: 138px;
}
.combo select {
  appearance: none;
  width: 100%;
  height: 22px;
  border: 1px solid #abc1de;
  background: #efefef;
}
.combo .caret {
  position: absolute;
  right: 4px;
  top: 10px;
}
.cluster {
  display: flex;
  height: 22px;
  border: 1px solid #8fb0dc;
  border-radius: 2px;
  background: linear-gradient(#d2e0f2, #c4d6ee 50%, #bcd0ec 50%, #cfdff3);
}
.cluster button {
  display: flex;
  align-items: center;
  justify-content: center;
  width: 22px;
}
.cluster button + button {
  border-left: 1px solid #a9c2e4;
}
.cluster .drop {
  width: 33px;
  gap: 5px;
}
.serif button {
  font: 14px "Liberation Serif", serif;
  color: #64779c;
}
.serif .letter {
  font-weight: 700;
  font-size: 15px;
}
.cluster .highlight {
  gap: 0;
  color: #64779c;
  font-size: 10px;
}
.highlight .caret {
  margin-left: 4px;
}
.tiny,
.abc,
.az {
  fill: #64779c;
  font: 700 7px "Liberation Sans", sans-serif;
}
.az {
  font: 700 9px "Liberation Serif", serif;
}
.abc {
  font-size: 9px;
}

/* workspace */
.workspace {
  display: flex;
  flex: 1;
  min-height: 0;
  background: var(--steel);
}
.nav-pane {
  display: flex;
  flex-direction: column;
  width: 34px;
  padding-left: 4px;
  border-right: 1px solid var(--line);
  background: linear-gradient(90deg, var(--steel) 29px, #a9cbf6 29px);
}
.nav-open {
  display: grid;
  place-items: center;
  width: 25px;
  height: 24px;
  border: 1px solid #fff;
  border-right-color: var(--line);
  border-bottom-color: var(--line);
  background: #cfe2fb;
}
/* rotated by 180deg, so left and right borders are swapped */
.nav-title {
  flex: 1;
  width: 25px;
  border: 1px solid #fff;
  border-top: 0;
  border-left-color: var(--line);
  background: var(--sky);
  writing-mode: vertical-rl;
  transform: rotate(180deg);
  font-size: 12px;
  font-weight: 700;
}
.document {
  display: flex;
  flex-direction: column;
  flex: 1;
  min-width: 0;
}
.doc-tabs {
  display: flex;
  height: 24px;
  padding: 0 8px 0 1px;
  border-bottom: 1px solid var(--line);
}
.doc-tab {
  display: flex;
  height: 24px;
  color: #0a1f44;
}
.doc-face {
  display: flex;
  align-items: center;
  gap: 7px;
  height: 24px;
  padding: 0 0 2px 5px;
  border: 1px solid #5f89c4;
  border-width: 1px 0 0 1px;
  border-radius: 3px 0 0 0;
  background: linear-gradient(#c8defa, #a9cbf6 45%, #8fbcf8);
}
.doc-tab + .doc-tab {
  margin-left: -8px;
}
.second .doc-face {
  border-left: 0;
}
.current {
  color: #000;
  font-family: "Roboto", sans-serif;
  font-weight: 700;
  z-index: 1;
}
.current .doc-face {
  gap: 9px;
  border-color: #8a6d4b;
  background: linear-gradient(#ffd29b, #ffb14c 40%, #ffdc78);
}
.doc-close {
  margin-left: auto;
}

/* report */
.report {
  flex: 1;
  margin-right: 17px;
  padding: 29px 0 0 23px;
  overflow: hidden;
  background: #fff;
  box-shadow: 17px 0 #f6f6f6;
  color: #111;
  font: 11px/14px "Roboto", sans-serif;
}
.report th {
  font-weight: 400;
}
.report-head {
  display: flex;
  height: 154px;
}
.head-left {
  width: 376px;
}
.head-left h2 {
  width: 280px;
  margin: 11px 0 24px 14px;
  font-size: 13px;
  font-weight: 400;
  line-height: 18px;
}
.address,
.fields,
.costs {
  border-collapse: collapse;
  table-layout: fixed;
}
.address {
  width: 281px;
}
.address th,
.fields th {
  padding: 0 2px;
  text-align: left;
  white-space: nowrap;
}
.address th {
  width: 96px;
}
.address td,
.fields td {
  padding: 0 2px 2px;
  border: 1px solid #a6a6a6;
  background: var(--cell);
}
.address td {
  height: 20px;
}
.fields {
  width: 484px;
}
.fields th {
  height: 18px;
  padding: 1px 1px 0;
  vertical-align: top;
}
.fields td {
  height: 21px;
  padding: 0 1px 2px;
}
.fields .num { text-align: right; }
.fields .mid { text-align: center; }
.fields.amp {
  width: 101px;
  margin-top: 12px;
}
.amp th {
  height: 19px;
}
.time {
  margin: 25px 0 0 69px;
  color: #1f497d;
}
.w192 { width: 192px; }
.w160 { width: 160px; }
.w132 { width: 132px; }
.w96 { width: 96px; }
.w94 { width: 94px; }
.w92 { width: 92px; }
.costs {
  width: 1904px;
}
.costs th,
.costs td {
  height: 24px;
  padding: 3px 10px 0 1px;
  border: 1px solid #000;
  vertical-align: top;
  text-align: right;
}
.costs th {
  padding: 3px 1px 0 0;
  text-align: center;
}
.costs .left,
.costs td:first-child,
.costs td:nth-child(n + 15) {
  padding: 2px 0 0 1px;
  text-align: left;
}
.costs thead,
.costs tfoot {
  background: var(--cell);
}
.costs tfoot td,
.costs .subtotal td {
  height: 25px;
}
.page-no {
  width: 241px;
  height: 21px;
  border: 1px solid #000;
  border-top: 0;
  line-height: 17px;
  text-align: center;
}
.scrollbar {
  display: flex;
  align-items: center;
  height: 17px;
  padding: 0 23px 0 5px;
  gap: 6px;
  background: linear-gradient(#e0e0e0 1px, #f0f0f0 1px);
  border-bottom: 1px solid #d0dced;
}
.scrollbar button {
  width: 6px;
}
.track {
  flex: 1;
}
.thumb {
  display: grid;
  place-items: center;
  width: 87.500%;
  height: 15px;
  border: 1px solid #596b8a;
  border-radius: 2px;
  background: linear-gradient(#f5f7fa, #e0e5ec 45%, #b8c1ce 50%, #cdd3dc);
}
.grip {
  width: 7px;
  height: 7px;
  background: repeating-linear-gradient(90deg, #6d7888 0 1px, #eef1f5 1px 2px);
}

/* status bar */
.statusbar {
  display: flex;
  align-items: center;
  height: 22px;
  flex: none;
  border-top: 1px solid #567db0;
  background: linear-gradient(#d9e8fc, #c8ddf9 7px, #b3d0f5 7px, #d6e6fa);
}
.status-view,
.status-lock {
  padding-bottom: 2px;
  line-height: 19px;
  color: #1e3c72;
}
.status-view {
  flex: 0 0 50%;
  padding-left: 8px;
  border-right: 1px solid #8fb0dc;
}
.status-lock {
  flex: 1;
  padding-right: 8px;
  text-align: right;
}
.view-buttons {
  display: flex;
  height: 100%;
  padding: 1px 0 1px 4px;
  border-left: 1px solid #5f89c4;
  background: #9dbfeb;
}
.view-buttons button {
  display: grid;
  place-items: center;
  width: 19px;
  border-right: 1px solid #8fb0dc;
  background: linear-gradient(#e2edfb, #c5daf6);
}
.view-buttons .on {
  background: linear-gradient(#fbdba7, #fdc464 50%, #fde48f);
}

/* taskbar */
.taskbar {
  display: flex;
  height: 30px;
  flex: none;
  color: #fff;
  background: linear-gradient(#3168d5, #4993e6 2px, #245edb 5px, #2157d7 24px, #2663e0 27px, #1941a5);
}
.start {
  display: flex;
  align-items: center;
  gap: 5px;
  width: 97px;
  padding: 0 0 2px 9px;
  border-radius: 0 10px 10px 0;
  background: linear-gradient(#2f7a30, #5cb35c 3px, #3c963c 7px, #388e38 24px, #2b6e2b);
  box-shadow: 2px 0 3px #153c8f;
  font: italic 700 18px "Open Sans", sans-serif;
  text-shadow: 1px 1px 1px #214f21;
}
.quick-launch {
  display: flex;
  align-items: center;
  gap: 7px;
  width: 85px;
  padding-left: 13px;
}
.tasks {
  display: flex;
  flex: 1;
  align-items: center;
  gap: 2px;
}
.task {
  display: flex;
  align-items: center;
  gap: 4px;
  width: 158px;
  height: 24px;
  padding-left: 8px;
  border-radius: 2px;
  background: linear-gradient(#5b9bf8, #3f83f4 4px, #3a7df0 20px, #2f6fdf);
  box-shadow: inset 1px 0 #6aa3fa, inset -1px 0 #2861cf;
}
.pressed {
  background: #1c4fb5;
  box-shadow: inset 1px 1px 1px #123782;
}
.lang {
  display: flex;
  align-items: center;
  gap: 11px;
  padding-right: 15px;
}
.ask {
  width: 14px;
  height: 14px;
  border: 1px solid #000;
  background: #ffffe1;
  color: #000;
  font-weight: 700;
  line-height: 12px;
}
.tray {
  display: flex;
  align-items: center;
  gap: 2px;
  padding-right: 12px;
  border-left: 1px solid #0c4fa8;
  background: linear-gradient(#1290e9, #19b9f3 2px, #1290e9 6px, #128fe8 24px, #0f6fc5);
}
.chevron {
  display: grid;
  place-items: center;
  width: 19px;
  height: 19px;
  margin-left: -10px;
  border: 1px solid #8fd0ff;
  border-radius: 50%;
  background: radial-gradient(#3aa4f5, #1668d0);
}
.clock {
  margin-left: 6px;
}
```
